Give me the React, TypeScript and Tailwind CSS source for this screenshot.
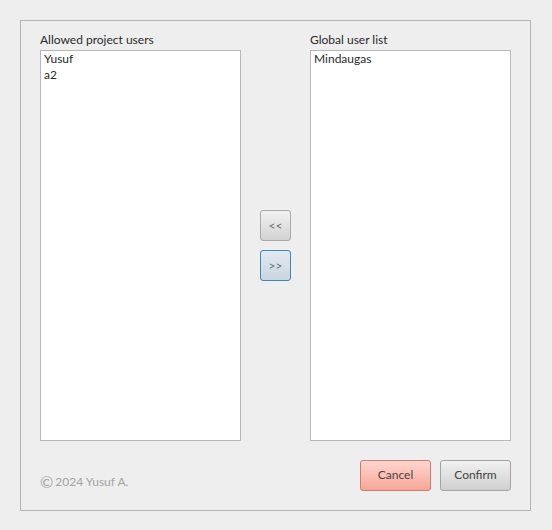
export default function App() {
  const allowed = ["Yusuf", "a2"];
  const global = ["Mindaugas"];

  return (
    <div
      className="w-[552px] h-[530px] bg-[#eeeeee] p-5 text-[12px] text-[#2a2a2a]"
      style={{ fontFamily: "Lato, 'Liberation Sans', sans-serif" }}
    >
      <div className="h-[491px] w-[511px] border border-[#b4b4b4] px-[19px] pt-[11px] pb-[19px] flex flex-col">
        <div className="flex gap-[19px]">
          {/* Allowed users */}
          <div className="flex flex-col">
            <div className="h-[18px] leading-[16px]">Allowed project users</div>
            <div className="w-[201px] h-[391px] bg-white border border-[#b8b8b8] px-[3px]">
              {allowed.map((u) => (
                <div key={u} className="leading-[16px]">{u}</div>
              ))}
            </div>
          </div>

          {/* Move buttons */}
          <div className="flex flex-col justify-center gap-[9px] pt-[18px]">
            <button className="w-[31px] h-[31px] rounded-[3px] border border-[#a9a9a9] bg-gradient-to-b from-[#f2f2f2] to-[#d2d2d2] text-[12px] text-[#707070] leading-none">
              &lt;&lt;
            </button>
            <button className="w-[31px] h-[31px] rounded-[3px] border border-[#3f86bd] bg-gradient-to-b from-[#e2eaf1] to-[#c9d5df] text-[12px] text-[#707070] leading-none">
              &gt;&gt;
            </button>
          </div>

          {/* Global users */}
          <div className="flex flex-col">
            <div className="h-[18px] leading-[16px]">Global user list</div>
            <div className="w-[201px] h-[391px] bg-white border border-[#b8b8b8] px-[3px]">
              {global.map((u) => (
                <div key={u} className="leading-[16px]">{u}</div>
              ))}
            </div>
          </div>
        </div>

        {/* Footer */}
        <div className="mt-auto flex items-end justify-between">
          <div className="flex items-center text-[#a3a3a3] leading-[16px] pb-[1px]">
            <span className="text-[16px] leading-[16px] mr-[2px]">©</span>
            <span>2024 Yusuf A.</span>
          </div>
          <div className="flex gap-[9px]">
            <button className="w-[71px] h-[31px] rounded-[3px] border border-[#cf7b6e] bg-gradient-to-b from-[#ffd6d0] to-[#f6a797] text-[#444444] leading-[14px] pb-[2px]">
              Cancel
            </button>
            <button className="w-[71px] h-[31px] rounded-[3px] border border-[#a3a3a3] bg-gradient-to-b from-[#f1f1f1] to-[#d0d0d0] text-[#444444] leading-[14px] pb-[2px]">
              Confirm
            </button>
          </div>
        </div>
      </div>
    </div>
  );
}
